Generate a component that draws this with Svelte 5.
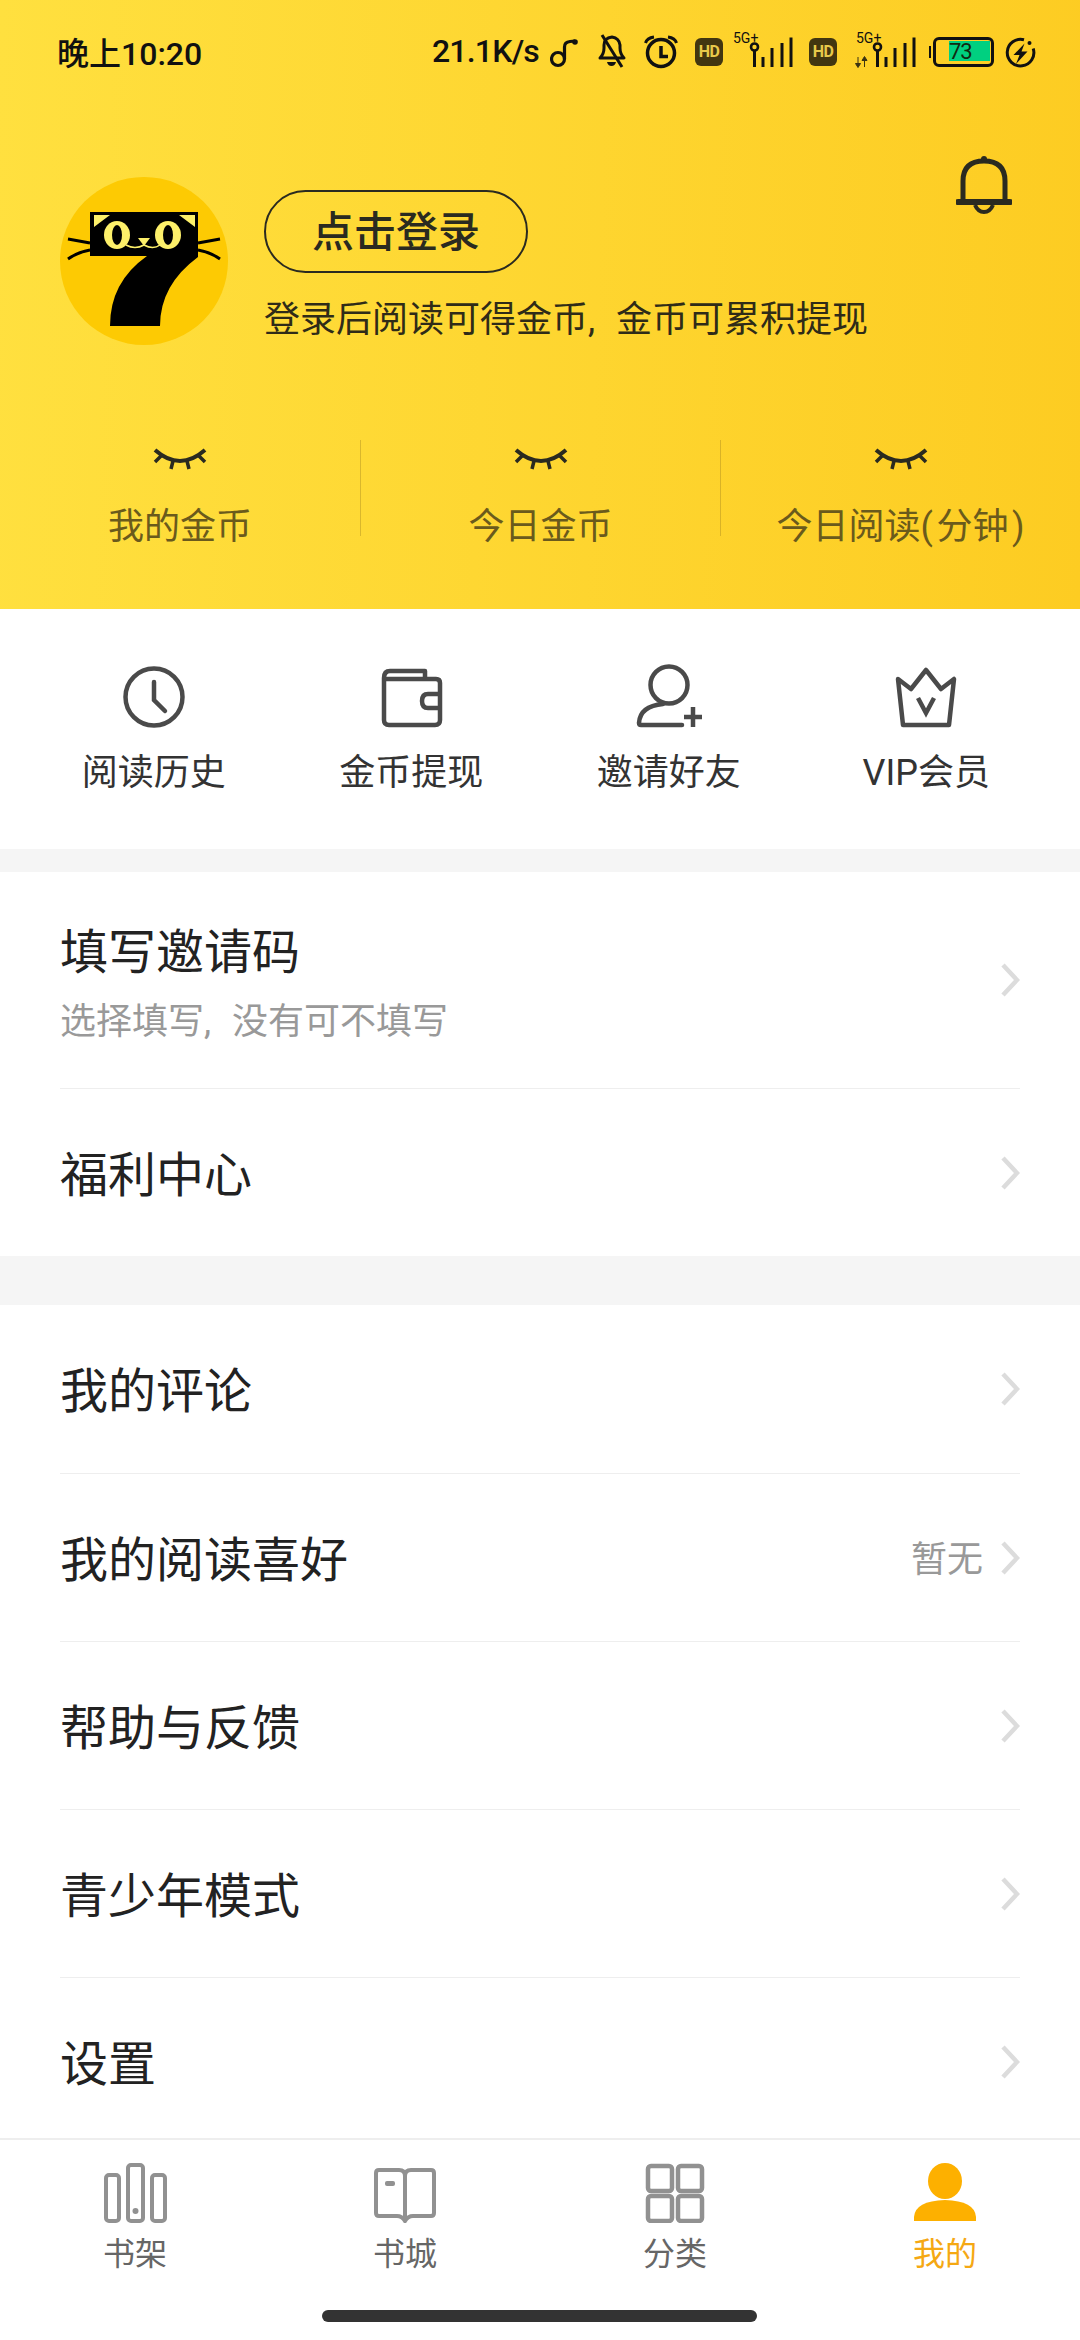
<script>
  const stats = ['我的金币', '今日金币', '今日阅读(\u200A分钟\u200A)'];
  const rowsB = [
    { title: '我的评论' },
    { title: '我的阅读喜好', value: '暂无' },
    { title: '帮助与反馈' },
    { title: '青少年模式' },
    { title: '设置' }
  ];
</script>

{#snippet chevron()}
  <svg class="chev" width="20" height="34" viewBox="0 0 20 34"><path d="M3 2 L17 17 L3 32" fill="none" stroke="#dcdcdc" stroke-width="4.5"/></svg>
{/snippet}

{#snippet signal(lte)}
  <span class="sig" class:second={lte}>
    <span class="fiveg">5G+</span>
    <svg width="62" height="36" viewBox="0 0 62 36">
      {#if lte}
        <path d="M3 23V30M0.500 29.500H5.500L3 33.500ZM9.500 33V26M7 26.500H12L9.500 22.500Z" fill="#3b3312" stroke="#3b3312" stroke-width="1"/>
      {/if}
      <circle cx="22.500" cy="13" r="3.500" fill="none" stroke="#111" stroke-width="2.600"/>
      <path d="M22.500 17V33M31 23V33M40 14V33M50 9V33M59 3.500V33" stroke="#111" stroke-width="3" fill="none"/>
    </svg>
  </span>
{/snippet}

<div class="page">
  <header class="head">
    <div class="status">
      <span class="time">晚上10:20</span>
      <span class="speed">21.1K/s</span>
      <svg class="st note" width="30" height="32" viewBox="0 0 30 32"><circle cx="8" cy="23" r="6.500" fill="none" stroke="#111" stroke-width="3.200"/><path d="M14.500 23V11Q14.500 6 20 5.500L25 5" fill="none" stroke="#111" stroke-width="3.200"/><circle cx="25" cy="6" r="2.800" fill="#111"/></svg>
      <svg class="st belloff" width="30" height="36" viewBox="0 0 30 36"><path d="M2 24Q6 20 6 14V11Q6 4 14 3Q21 4 22 11V14Q22 20 26 24Z" fill="none" stroke="#111" stroke-width="3" stroke-linejoin="round"/><path d="M4 1L24 33" stroke="#111" stroke-width="3"/><path d="M9 28H18Q17 32 13.500 32Q10 32 9 28Z" fill="#111"/></svg>
      <svg class="st alarm" width="34" height="34" viewBox="0 0 34 34"><circle cx="17" cy="18" r="13.500" fill="none" stroke="#111" stroke-width="3.500"/><path d="M17 11V21.500H24" fill="none" stroke="#111" stroke-width="3.500"/><path d="M1.500 8Q3 3 10 2M32.500 8Q31 3 24 2" fill="none" stroke="#111" stroke-width="3"/></svg>
      <span class="hd">HD</span>
      {@render signal(false)}
      <span class="hd second">HD</span>
      {@render signal(true)}
      <span class="batt"><span class="fill"></span><span class="pct">73</span></span>
      <svg class="st bolt" width="31" height="31" viewBox="0 0 31 31"><path d="M19 2.800A13.300 13.300 0 1 0 28.200 11.500" fill="none" stroke="#111" stroke-width="3"/><circle cx="24.500" cy="6" r="2" fill="#111"/><path d="M19.500 6.500L8.500 18H14.500L11 27L22.500 14.500H16.500Z" fill="#111"/></svg>
    </div>

    <div class="profile">
      <svg class="avatar" width="168" height="168" viewBox="60 177 168 168">
        <circle cx="144" cy="261" r="84" fill="#fdca03"/>
        <path d="M90 212H198V257Q160 285 160 326H110Q110 282 147 256H90Z" fill="#000"/>
        <path d="M68 239L90 243M68 259Q78 252 90 250M220 239L198 243M220 259Q210 252 198 250" stroke="#000" stroke-width="3" fill="none"/>
        <path d="M94 215H110L94 227ZM195 215H179L195 227Z" fill="#fdf06a"/>
        <ellipse cx="117" cy="235" rx="13" ry="14" fill="#fdf06a"/>
        <ellipse cx="168" cy="235" rx="13" ry="14" fill="#fdf06a"/>
        <ellipse cx="117" cy="235" rx="5" ry="10" fill="#000"/>
        <ellipse cx="168" cy="235" rx="5" ry="10" fill="#000"/>
        <path d="M138 238H150L144 246Z" fill="#fdf06a"/>
        <path d="M126 245Q135 250 144 245Q153 250 160 245" fill="none" stroke="#fdf06a" stroke-width="1.500"/>
      </svg>
      <div class="info">
        <div class="login">点击登录</div>
        <div class="hint">登录后阅读可得金币, 金币可累积提现</div>
      </div>
      <svg class="bell" width="56" height="60" viewBox="0 0 56 60"><path d="M7 47V26Q7 6 28 6Q49 6 49 26V47" fill="none" stroke="#2a2a20" stroke-width="5"/><path d="M2 47H54" stroke="#2a2a20" stroke-width="6" stroke-linecap="round"/><path d="M19 50Q22 57 28 57Q34 57 37 50" fill="none" stroke="#2a2a20" stroke-width="4"/><circle cx="28" cy="4" r="3" fill="#2a2a20"/></svg>
    </div>

    <div class="stats">
      {#each stats as s}
        <div class="stat">
          <svg width="54" height="22" viewBox="0 0 54 22"><path d="M2 2Q27 24 52 2" fill="none" stroke="#2a2a20" stroke-width="4"/><path d="M8 8L2 14M46 8L52 14M20 13L18 21M34 13L36 21" stroke="#2a2a20" stroke-width="3.500" fill="none"/></svg>
          <span>{s}</span>
        </div>
      {/each}
    </div>
  </header>

  <section class="quick">
    <div class="qitem">
      <svg width="66" height="66" viewBox="0 0 66 66"><circle cx="33" cy="33" r="28.500" fill="none" stroke="#4a4a4a" stroke-width="4.500"/><path d="M33 18V36L44 47" fill="none" stroke="#4a4a4a" stroke-width="4.500" stroke-linecap="round"/></svg>
      <span>阅读历史</span>
    </div>
    <div class="qitem">
      <svg width="66" height="66" viewBox="0 0 66 66"><path d="M6 14V56Q6 61 11 61H57Q62 61 62 56V19Q62 15 58 15H6ZM6 14Q6 7 12 7H47V15" fill="none" stroke="#4a4a4a" stroke-width="4.500" stroke-linejoin="round"/><path d="M62 30H50Q44 30 44 37Q44 44 50 44H62" fill="none" stroke="#4a4a4a" stroke-width="4.500"/></svg>
      <span>金币提现</span>
    </div>
    <div class="qitem">
      <svg width="66" height="66" viewBox="0 0 66 66"><circle cx="33" cy="21" r="18.500" fill="none" stroke="#4a4a4a" stroke-width="4.500"/><path d="M27 40Q4 42 3 59Q3 61 5 61H46" fill="none" stroke="#4a4a4a" stroke-width="4.500" stroke-linecap="round"/><path d="M57 43V63M48 53H66" stroke="#4a4a4a" stroke-width="4.500"/></svg>
      <span>邀请好友</span>
    </div>
    <div class="qitem">
      <svg width="66" height="66" viewBox="0 0 66 66"><path d="M5 15L18 25L33 6L48 25L61 15L56 61H10Z" fill="none" stroke="#4a4a4a" stroke-width="4.500" stroke-linejoin="round"/><path d="M25 34L33 49L41 34" fill="none" stroke="#4a4a4a" stroke-width="4.500"/></svg>
      <span>VIP会员</span>
    </div>
  </section>

  <section class="card first">
    <div class="row tall">
      <div class="rowtext">
        <div class="title">填写邀请码</div>
        <div class="sub">选择填写, 没有可不填写</div>
      </div>
      {@render chevron()}
    </div>
    <div class="row">
      <div class="title">福利中心</div>
      {@render chevron()}
    </div>
  </section>

  <section class="card list">
    {#each rowsB as r}
      <div class="row">
        <div class="title">{r.title}</div>
        {#if r.value}<span class="value">{r.value}</span>{/if}
        {@render chevron()}
      </div>
    {/each}
  </section>

  <nav class="tabs">
    <div class="tab">
      <svg width="64" height="60" viewBox="0 0 64 60"><g fill="none" stroke="#919191" stroke-width="4"><rect x="3" y="12" width="13" height="46" rx="3"/><rect x="25" y="2" width="15" height="56" rx="3"/><rect x="49" y="12" width="13" height="46" rx="3"/></g><circle cx="32.500" cy="48" r="3" fill="#919191"/></svg>
      <span>书架</span>
    </div>
    <div class="tab">
      <svg width="64" height="60" viewBox="0 0 64 60"><path d="M32 13Q32 7 26 7H6Q3 7 3 10V50Q3 53 6 53H24Q29 53 32 58Q35 53 40 53H58Q61 53 61 50V10Q61 7 58 7H38Q32 7 32 13V57" fill="none" stroke="#919191" stroke-width="4"/><rect x="12" y="18" width="10" height="5" rx="2" fill="#919191"/></svg>
      <span>书城</span>
    </div>
    <div class="tab">
      <svg width="64" height="60" viewBox="0 0 64 60"><g fill="none" stroke="#919191" stroke-width="4.500"><rect x="5" y="3" width="24" height="25" rx="3"/><rect x="35" y="3" width="24" height="25" rx="3"/><rect x="5" y="33" width="24" height="25" rx="3"/><rect x="35" y="33" width="24" height="25" rx="3"/></g></svg>
      <span>分类</span>
    </div>
    <div class="tab on">
      <svg width="64" height="60" viewBox="0 0 64 60"><ellipse cx="32" cy="18" rx="17" ry="18" fill="#fdb000"/><path d="M1 58V54Q2 38 32 37Q62 38 63 54V58Z" fill="#fdb000"/></svg>
      <span>我的</span>
    </div>
    <div class="homebar"></div>
  </nav>
</div>

<style>
  :global(body) {
    margin: 0;
    background: #fff;
  }

  .page {
    width: 1080px;
    height: 2340px;
    display: flex;
    flex-direction: column;
    overflow: hidden;
    background: #f5f5f5;
    font-family: Roboto, "Noto Sans CJK SC", sans-serif;
    color: #222;
  }

  .head {
    height: 609px;
    flex: none;
    box-sizing: border-box;
    background: linear-gradient(92deg, #ffe03f 0%, #fdcc22 100%);
  }

  .status {
    height: 104px;
    padding: 0 44px 0 57px;
    display: flex;
    align-items: center;
    font-size: 32px;
    font-weight: 500;
    color: #111;
  }

  .time {
    margin-right: auto;
    margin-bottom: 2px;
  }

  .speed {
    margin-right: 11px;
    margin-bottom: 2px;
    letter-spacing: -0.8px;
  }

  .st {
    flex: none;
  }

  .belloff {
    margin-left: 18px;
  }

  .alarm {
    margin-left: 16px;
  }

  .hd {
    width: 28px;
    height: 28px;
    margin-left: 17px;
    border-radius: 6px;
    background: #423610;
    color: #e8c94a;
    font-size: 16px;
    font-weight: 700;
    line-height: 28px;
    text-align: center;
    letter-spacing: -0.5px;
  }

  .hd.second {
    margin-left: 15px;
  }

  .sig {
    position: relative;
    width: 62px;
    height: 36px;
    margin-left: 9px;
  }

  .sig.second {
    margin-left: 18px;
  }

  .fiveg {
    position: absolute;
    left: 1px;
    top: -4px;
    font-size: 14px;
    font-weight: 400;
    line-height: 16px;
    color: #111;
  }

  .batt {
    position: relative;
    width: 61px;
    height: 30px;
    margin-left: 16px;
    box-sizing: border-box;
    border: 3px solid #111;
    border-radius: 6px;
  }

  .batt::before {
    content: "";
    position: absolute;
    left: -7px;
    top: 6px;
    width: 2px;
    height: 12px;
    background: #111;
  }

  .fill {
    position: absolute;
    left: 13px;
    top: 1px;
    width: 41px;
    height: 20px;
    background: #00d080;
  }

  .pct {
    position: absolute;
    left: 13px;
    top: 0;
    font-size: 22px;
    font-weight: 400;
    line-height: 24px;
    letter-spacing: -1px;
    color: #102a10;
  }

  .bolt {
    margin-left: 11px;
  }

  .profile {
    height: 200px;
    margin-top: 51px;
    padding: 0 68px 0 60px;
    display: flex;
    align-items: flex-start;
  }

  .avatar {
    flex: none;
    margin-top: 22px;
  }

  .info {
    margin: 35px 0 0 36px;
  }

  .login {
    width: 264px;
    height: 83px;
    box-sizing: border-box;
    border: 2px solid #2a2a20;
    border-radius: 42px;
    font-size: 42px;
    font-weight: 500;
    line-height: 81px;
    text-align: center;
    color: #2a2a20;
  }

  .hint {
    margin-top: 22px;
    font-size: 36px;
    line-height: 50px;
    word-spacing: 12px;
    color: #2f2b18;
  }

  .bell {
    margin-left: auto;
    flex: none;
  }

  .stats {
    margin-top: 85px;
    display: grid;
    grid-template-columns: repeat(3, 1fr);
  }

  .stat {
    height: 96px;
    display: flex;
    flex-direction: column;
    align-items: center;
    color: #6a5a1c;
    font-size: 36px;
    line-height: 50px;
    white-space: nowrap;
  }

  .stat + .stat {
    border-left: 1px solid rgba(150, 120, 30, 0.35);
  }

  .stat svg {
    margin: 8px 0 32px;
    flex: none;
  }

  .quick {
    height: 240px;
    flex: none;
    box-sizing: border-box;
    padding: 55px 25px 0;
    display: grid;
    grid-template-columns: repeat(4, 1fr);
    background: #fff;
  }

  .qitem {
    display: flex;
    flex-direction: column;
    align-items: center;
    font-size: 36px;
    line-height: 50px;
    color: #333;
  }

  .qitem svg {
    margin-bottom: 18px;
  }

  .card {
    background: #fff;
    padding: 0 60px;
  }

  .first {
    margin-top: 23px;
    flex: none;
  }

  .list {
    margin-top: 49px;
    flex: 1;
    min-height: 0;
    overflow: hidden;
  }

  .row {
    height: 168px;
    box-sizing: border-box;
    display: flex;
    align-items: center;
  }

  .row + .row {
    border-top: 1px solid #eee;
  }

  .row.tall {
    height: 216px;
  }

  .rowtext,
  .row > .title {
    flex: 1;
  }

  .title {
    padding-top: 6px;
    font-size: 48px;
    line-height: 66px;
    color: #222;
  }

  .sub {
    margin-top: 11px;
    font-size: 36px;
    line-height: 50px;
    word-spacing: 12px;
    color: #999;
  }

  .value {
    margin: 0 17px 3px 0;
    font-size: 36px;
    color: #999;
  }

  .chev {
    flex: none;
  }

  .tabs {
    position: relative;
    height: 202px;
    flex: none;
    box-sizing: border-box;
    padding-top: 23px;
    display: grid;
    grid-template-columns: repeat(4, 270px);
    align-content: start;
    border-top: 2px solid #eee;
    background: #fff;
  }

  .tab {
    display: flex;
    flex-direction: column;
    align-items: center;
    font-size: 32px;
    line-height: 44px;
    color: #666;
  }

  .tab svg {
    margin-bottom: 9px;
  }

  .tab.on {
    color: #f5a813;
  }

  .homebar {
    position: absolute;
    left: 322px;
    bottom: 18px;
    width: 435px;
    height: 12px;
    border-radius: 6px;
    background: #333;
  }
</style>
